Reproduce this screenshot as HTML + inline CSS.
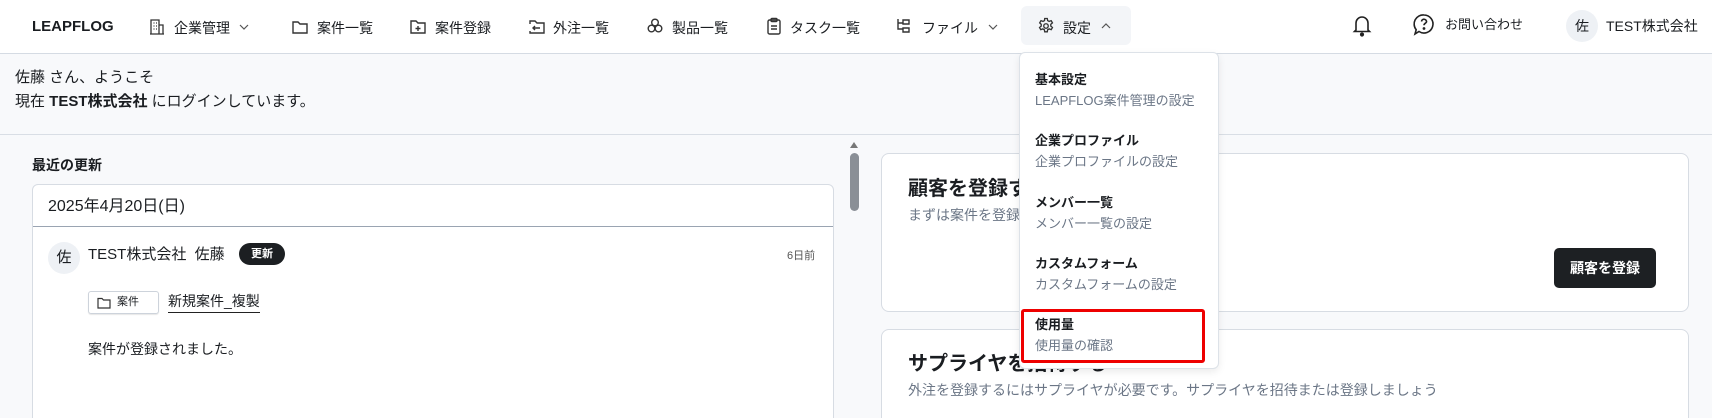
<!DOCTYPE html>
<html style="overflow:hidden;width:1712px;height:418px"><head><meta charset="utf-8"><style>
*{box-sizing:border-box;margin:0;padding:0}
body{width:1712px;height:418px;overflow:hidden;background:#f8f9fb;font-family:"Liberation Sans","Noto Sans CJK JP",sans-serif;color:#1a1d21;font-size:14px}
#w{position:relative;width:1712px;height:418px;overflow:hidden}
.a{position:absolute;white-space:nowrap}
.nav{position:absolute;left:0;top:0;width:1712px;height:54px;background:#fff;border-bottom:1px solid #d5dbe3}
.ni{position:absolute;top:18px;height:20px;line-height:20px;font-size:14px}
svg{position:absolute}
.sub{color:#6b7686}
.card{position:absolute;background:#fff;border:1px solid #d7dce3;border-radius:8px}
</style></head><body><div id="w">
<div class="nav">
<div class="a" style="left:32px;top:16px;font-weight:bold;font-size:15px;line-height:22px">LEAPFLOG</div>
<svg style="left:148px;top:18px" width="18" height="18" viewBox="0 0 18 18" fill="none" stroke="#333" stroke-width="1.3"><path d="M3 16V2h8v14M11 7h4v9M2 16h14M5.5 5h1M8 5h1M5.5 8h1M8 8h1M5.5 11h1M8 11h1"/></svg>
<div class="ni" style="left:174px">企業管理</div>
<svg style="left:238px;top:22px" width="12" height="10" viewBox="0 0 12 10" fill="none" stroke="#555" stroke-width="1.2"><path d="M2 3l4 4 4-4"/></svg>
<svg style="left:291px;top:19px" width="18" height="16" viewBox="0 0 18 16" fill="none" stroke="#333" stroke-width="1.4"><path d="M2 3h5l2 2h7v9H2z"/></svg>
<div class="ni" style="left:317px">案件一覧</div>
<svg style="left:409px;top:18px" width="18" height="17" viewBox="0 0 18 17" fill="none" stroke="#333" stroke-width="1.4"><path d="M2 3h5l2 2h7v10H2z M9 8v5M6.5 10.5h5"/></svg>
<div class="ni" style="left:435px">案件登録</div>
<svg style="left:528px;top:18px" width="18" height="17" viewBox="0 0 18 17" fill="none" stroke="#333" stroke-width="1.4"><path d="M2 6V3h5l2 2h7v10H2v-2M12 10H5M7 8l-2 2 2 2"/></svg>
<div class="ni" style="left:553px">外注一覧</div>
<svg style="left:646px;top:17px" width="18" height="18" viewBox="0 0 18 18" fill="none" stroke="#333" stroke-width="1.4"><circle cx="9" cy="5.5" r="3.3"/><circle cx="5.5" cy="11.5" r="3.3"/><circle cx="12.5" cy="11.5" r="3.3"/></svg>
<div class="ni" style="left:672px">製品一覧</div>
<svg style="left:766px;top:17px" width="16" height="19" viewBox="0 0 16 19" fill="none" stroke="#333" stroke-width="1.4"><rect x="2" y="3" width="12" height="14" rx="1.5"/><rect x="5" y="1.5" width="6" height="3" rx="1"/><path d="M5 9h6M5 12h6"/></svg>
<div class="ni" style="left:790px">タスク一覧</div>
<svg style="left:895px;top:17px" width="18" height="18" viewBox="0 0 18 18" fill="none" stroke="#333" stroke-width="1.4"><path d="M3 2v10h5M8 3h6v4H8zM8 11h6v4H8zM3 6h5"/></svg>
<div class="ni" style="left:922px">ファイル</div>
<svg style="left:987px;top:22px" width="12" height="10" viewBox="0 0 12 10" fill="none" stroke="#555" stroke-width="1.2"><path d="M2 3l4 4 4-4"/></svg>
<div class="a" style="left:1021px;top:6px;width:110px;height:39px;background:#f3f5f8;border-radius:6px"></div>
<svg style="left:1037px;top:17px" width="18" height="18" viewBox="0 0 24 24" fill="none" stroke="#333" stroke-width="1.8"><path d="M10.3 2h3.4l.5 2.8 2 1.1 2.7-1 1.7 2.9-2.2 1.9v2.4l2.2 1.9-1.7 2.9-2.7-1-2 1.1-.5 2.8h-3.4l-.5-2.8-2-1.1-2.7 1-1.7-2.9 2.2-1.9V9.7L3.6 7.8l1.7-2.9 2.7 1 2-1.1z"/><circle cx="12" cy="12" r="3"/></svg>
<div class="ni" style="left:1063px">設定</div>
<svg style="left:1100px;top:21px" width="12" height="10" viewBox="0 0 12 10" fill="none" stroke="#555" stroke-width="1.2"><path d="M2 7l4-4 4 4"/></svg>
<svg style="left:1352px;top:13px" width="20" height="24" viewBox="0 0 20 24" fill="none" stroke="#222" stroke-width="1.6"><path d="M4 17V10a6 6 0 0112 0v7l1.5 1.5h-15z"/><circle cx="10" cy="21.5" r="1.3" fill="#222"/></svg>
<svg style="left:1413px;top:13px" width="22" height="24" viewBox="0 0 22 24" fill="none" stroke="#222" stroke-width="1.6"><path d="M11 2a9 9 0 11-5 16.5L2 21l1.2-4.3A9 9 0 0111 2z"/><path d="M8.5 8.5a2.5 2.5 0 115 .5c-.5 1.2-2.5 1.5-2.5 3.2"/><circle cx="11" cy="15.5" r=".6" fill="#222"/></svg>
<div class="ni" style="left:1445px;top:15px;font-size:13px">お問い合わせ</div>
<div class="a" style="left:1566px;top:10px;width:32px;height:32px;border-radius:50%;background:#eef1f5;text-align:center;line-height:32px;font-size:14px">佐</div>
<div class="ni" style="left:1606px;top:16px;font-size:14px">TEST株式会社</div>
</div>

<div class="a" style="left:15px;top:66px;line-height:24px;font-size:15px">佐藤 さん、ようこそ</div>
<div class="a" style="left:15px;top:90px;line-height:24px;font-size:15px">現在 <b>TEST株式会社</b> にログインしています。</div>
<div class="a" style="left:0;top:134px;width:1712px;height:1px;background:#d9dee5"></div>

<div class="a" style="left:32px;top:155px;font-weight:bold;font-size:14px;line-height:20px">最近の更新</div>
<div class="card" style="left:32px;top:184px;width:802px;height:235px;border-radius:6px 6px 0 0">
<div class="a" style="left:0;top:0;width:800px;height:42px;border-bottom:1px solid #9aa4b2"></div>
<div class="a" style="left:15px;top:11px;font-size:16px;line-height:22px">2025年4月20日(日)</div>
<div class="a" style="left:15px;top:57px;width:32px;height:32px;border-radius:50%;background:#eef1f5;text-align:center;line-height:32px;font-size:15px">佐</div>
<div class="a" style="left:55px;top:59px;line-height:22px;font-size:15px">TEST株式会社&nbsp; 佐藤</div>
<div class="a" style="left:206px;top:58px;width:46px;height:22px;border-radius:11px;background:#1c1f22;color:#fff;font-size:11px;font-weight:bold;text-align:center;line-height:22px">更新</div>
<div class="a" style="left:754px;top:62px;font-size:11px;color:#555;line-height:18px">6日前</div>
<div class="a" style="left:55px;top:106px;width:71px;height:23px;border:1px solid #cdd3db;border-radius:3px;box-shadow:0 1px 1px rgba(0,0,0,.1)"></div>
<svg style="left:64px;top:112px" width="14" height="12" viewBox="0 0 14 12" fill="none" stroke="#333" stroke-width="1.2"><path d="M1 1.5h4l1.5 1.5h6.5v8H1z"/></svg>
<div class="a" style="left:84px;top:108px;font-size:11px;line-height:18px">案件</div>
<div class="a" style="left:135px;top:106px;line-height:21px;border-bottom:1px solid #222;font-size:14px">新規案件_複製</div>
<div class="a" style="left:55px;top:154px;font-size:14px;line-height:20px">案件が登録されました。</div>
</div>

<div class="a" style="left:850px;top:142px;width:0;height:0;border-left:4px solid transparent;border-right:4px solid transparent;border-bottom:6px solid #777"></div>
<div class="a" style="left:850px;top:153px;width:9px;height:58px;border-radius:5px;background:#8a8f96"></div>

<div class="card" style="left:881px;top:153px;width:808px;height:159px">
<div class="a" style="left:26px;top:21px;font-size:20px;font-weight:bold;line-height:28px">顧客を登録する</div>
<div class="a sub" style="left:26px;top:51px;font-size:14px;line-height:20px">まずは案件を登録するには顧客を登録しましょう</div>
<div class="a" style="left:672px;top:94px;width:102px;height:40px;background:#1d2023;border-radius:5px;color:#fff;font-weight:bold;font-size:14px;text-align:center;line-height:40px">顧客を登録</div>
</div>
<div class="card" style="left:881px;top:329px;width:808px;height:90px;border-radius:8px 8px 0 0">
<div class="a" style="left:26px;top:20px;font-size:20px;font-weight:bold;line-height:28px">サプライヤを招待する</div>
<div class="a sub" style="left:26px;top:50px;font-size:14px;line-height:20px">外注を登録するにはサプライヤが必要です。サプライヤを招待または登録しましょう</div>
</div>

<div class="a" style="left:1019px;top:52px;width:200px;height:317px;background:#fff;border:1px solid #dde2e8;border-radius:6px;box-shadow:0 3px 8px rgba(0,0,0,.08)">
<div class="a" style="left:15px;top:17px;font-size:13px;font-weight:bold;line-height:20px">基本設定</div>
<div class="a sub" style="left:15px;top:38px;font-size:13px;line-height:20px">LEAPFLOG案件管理の設定</div>
<div class="a" style="left:15px;top:78px;font-size:13px;font-weight:bold;line-height:20px">企業プロファイル</div>
<div class="a sub" style="left:15px;top:99px;font-size:13px;line-height:20px">企業プロファイルの設定</div>
<div class="a" style="left:15px;top:140px;font-size:13px;font-weight:bold;line-height:20px">メンバー一覧</div>
<div class="a sub" style="left:15px;top:161px;font-size:13px;line-height:20px">メンバー一覧の設定</div>
<div class="a" style="left:15px;top:201px;font-size:13px;font-weight:bold;line-height:20px">カスタムフォーム</div>
<div class="a sub" style="left:15px;top:222px;font-size:13px;line-height:20px">カスタムフォームの設定</div>
<div class="a" style="left:1px;top:256px;width:184px;height:54px;border:3px solid #ee0000;border-radius:3px"></div>
<div class="a" style="left:15px;top:262px;font-size:13px;font-weight:bold;line-height:20px">使用量</div>
<div class="a sub" style="left:15px;top:283px;font-size:13px;line-height:20px">使用量の確認</div>
</div>
</div></body></html>
